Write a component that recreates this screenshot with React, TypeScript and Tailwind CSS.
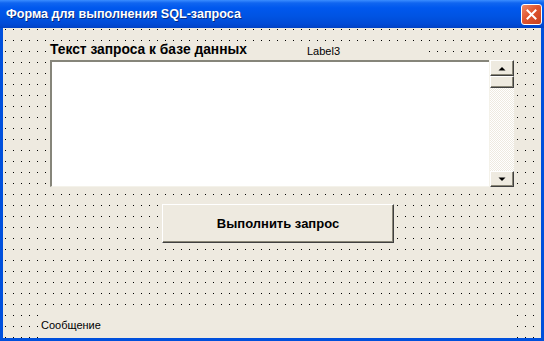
const font = "font-['Liberation_Sans',Arial,sans-serif]";

function CloseButton() {
  return (
    <div className="flex h-[21px] w-[21px] items-center justify-center rounded-[3px] border border-white bg-[linear-gradient(135deg,#f08a68_0%,#e0552f_45%,#c8401c_100%)]">
      <svg width="11" height="11" viewBox="0 0 11 11">
        <path d="M1.5 1.5 L9.5 9.5 M9.5 1.5 L1.5 9.5" stroke="#fff" strokeWidth="2" strokeLinecap="square" />
      </svg>
    </div>
  );
}

function ScrollButton({ dir }: { dir: "up" | "down" }) {
  return (
    <div className="flex h-[16px] items-center justify-center border-t border-l border-white border-r border-b border-r-[#404040] border-b-[#404040] bg-[#eeeae0] shadow-[inset_-1px_-1px_0_#8a8778]">
      <svg width="8" height="5" viewBox="0 0 8 5">
        {dir === "up" ? (
          <path d="M0.5 4.5 L4 1 L7.5 4.5 Z" fill="#000" />
        ) : (
          <path d="M0.5 0.5 L4 4 L7.5 0.5 Z" fill="#000" />
        )}
      </svg>
    </div>
  );
}

function QueryBox() {
  return (
    <div className="ml-[47px] mt-[2px] flex h-[127px] w-[464px]">
      <div className="flex-1 border-t-2 border-l-2 border-t-[#86857a] border-l-[#86857a] border-b border-b-[#f4f2ea] bg-white" />
      <div className="flex w-[25px] flex-col border-l border-l-[#f4f2ea]">
        <ScrollButton dir="up" />
        <div className="h-[12px] border-t border-l border-white border-r border-b border-r-[#404040] border-b-[#404040] bg-[#eeeae0] shadow-[inset_-1px_-1px_0_#8a8778]" />
        <div className="flex-1 bg-[repeating-conic-gradient(#ffffff_0_25%,#eeeae0_0_50%)] bg-[size:2px_2px]" />
        <ScrollButton dir="down" />
      </div>
    </div>
  );
}

export default function App() {
  return (
    <div className={`flex h-[341px] w-[544px] flex-col overflow-hidden bg-[#0050dc] ${font}`}>
      <div className="flex h-[28px] shrink-0 items-center justify-between bg-[linear-gradient(to_bottom,#3b8dff_0px,#1065f0_3px,#0058ee_8px,#0054e3_16px,#004ad6_24px,#0041c4_28px)] pl-[6px] pr-[2px]">
        <span className="text-[12.6px] font-bold leading-none text-white [text-shadow:1px_1px_0_#0a2a80]">
          Форма для выполнения SQL-запроса
        </span>
        <CloseButton />
      </div>

      <div className="mx-[3px] mb-[3px] flex flex-1 flex-col bg-[#eeeae0] bg-[radial-gradient(circle_at_0.5px_0.5px,#000_0.6px,transparent_0.7px)] bg-[size:8px_11px] bg-[position:2px_1px] text-black">
        <div className="mt-[14px] flex h-[16px]">
          <div className="ml-[47px] w-[253px] bg-[#eeeae0] text-[13.8px] font-bold leading-[16px]">
            Текст запроса к базе данных
          </div>
          <div className="w-[126px] bg-[#eeeae0] pl-[4px] pt-[2px] text-[11px] leading-[14px]">
            Label3
          </div>
        </div>

        <QueryBox />

        <button className="ml-[159px] mt-[17px] flex h-[39px] w-[232px] items-center justify-center border-t border-l border-white border-r border-b border-r-[#404040] border-b-[#404040] bg-[#eeeae0] text-[13px] font-bold shadow-[inset_-1px_-1px_0_#8a8778]">
          Выполнить запрос
        </button>

        <div className="flex-1" />

        <div className="ml-[35px] h-[26px] w-[475px] bg-[#eeeae0] pl-[3px] pt-[7px] text-[11px] leading-[13px]">
          Сообщение
        </div>
      </div>
    </div>
  );
}
